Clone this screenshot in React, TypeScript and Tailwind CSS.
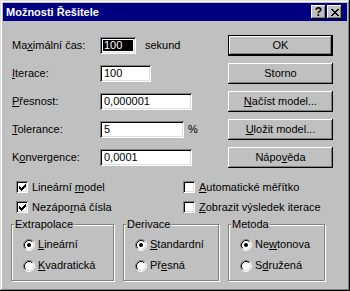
import type { ReactNode } from "react";

const raised =
  "shadow-[inset_-1px_-1px_#000,inset_1px_1px_#fff,inset_-2px_-2px_#808080]";
const sunken =
  "shadow-[inset_1px_1px_#808080,inset_-1px_-1px_#fff,inset_2px_2px_#000,inset_-2px_-2px_#dfdfdf]";

function TitleButton({ children }: { children: ReactNode }) {
  return (
    <div className={`w-[15px] h-[14px] bg-[#c0c0c0] flex items-center justify-center ${raised}`}>
      {children}
    </div>
  );
}

function CloseGlyph() {
  return (
    <svg width="8" height="7" viewBox="0 0 8 7" shapeRendering="crispEdges">
      <path
        fill="#000"
        d="M0 0h2v1h-2z M6 0h2v1h-2z M1 1h2v1h-2z M5 1h2v1h-2z M2 2h4v1h-4z M3 3h2v1h-2z M2 4h4v1h-4z M1 5h2v1h-2z M5 5h2v1h-2z M0 6h2v1h-2z M6 6h2v1h-2z"
      />
    </svg>
  );
}

function Field({ value, width, selected }: { value: string; width: string; selected?: boolean }) {
  return (
    <div className={`${width} h-[17px] bg-white ${sunken} ${selected ? "p-[3px]" : "pl-[4px]"} flex items-center`}>
      {selected ? (
        <div className="bg-black text-white w-full h-full flex items-center pl-[1px]">{value}</div>
      ) : (
        value
      )}
    </div>
  );
}

function Button({ children, isDefault }: { children: ReactNode; isDefault?: boolean }) {
  return (
    <div
      className={`w-[105px] h-[21px] flex items-center justify-center bg-[#c0c0c0] ${raised} ${
        isDefault ? "border border-black" : ""
      }`}
    >
      {children}
    </div>
  );
}

function Checkbox({ children, checked }: { children: ReactNode; checked?: boolean }) {
  return (
    <div className="flex items-center h-[20px]">
      <div className={`w-[12px] h-[12px] bg-white ${sunken} flex items-center justify-center`}>
        {checked && (
          <svg width="7" height="7" viewBox="0 0 7 7" shapeRendering="crispEdges">
            <path
              fill="#000"
              d="M6 0h1v1h-1z M5 1h2v1h-2z M0 2h1v1h-1z M4 2h3v1h-3z M0 3h2v1h-2z M3 3h3v1h-3z M0 4h5v1h-5z M1 5h3v1h-3z M2 6h1v1h-1z"
            />
          </svg>
        )}
      </div>
      <span className="ml-[4px]">{children}</span>
    </div>
  );
}

function Radio({ children, checked }: { children: ReactNode; checked?: boolean }) {
  return (
    <div className="flex items-center h-[21px] pl-[11px]">
      <svg width="12" height="12" viewBox="0 0 12 12">
        <circle cx="6" cy="6" r="4.5" fill="#fff" />
        <path d="M2.11 9.89 A5.5 5.5 0 0 1 9.89 2.11" stroke="#808080" fill="none" />
        <path d="M9.89 2.11 A5.5 5.5 0 0 1 2.11 9.89" stroke="#fff" fill="none" />
        <path d="M2.82 9.18 A4.5 4.5 0 0 1 9.18 2.82" stroke="#000" fill="none" />
        <path d="M9.18 2.82 A4.5 4.5 0 0 1 2.82 9.18" stroke="#dfdfdf" fill="none" />
        {checked && <circle cx="6" cy="6" r="2" fill="#000" />}
      </svg>
      <span className="ml-[3px]">{children}</span>
    </div>
  );
}

function Group({ title, width, children }: { title: string; width: string; children: ReactNode }) {
  return (
    <fieldset
      className={`${width} border border-[#808080] shadow-[inset_1px_1px_#fff,1px_1px_#fff] pt-[3px] pb-[4px]`}
    >
      <legend className="ml-[2px] px-px bg-[#c0c0c0] leading-[13px]">{title}</legend>
      {children}
    </fieldset>
  );
}

export default function App() {
  return (
    <div
      className={`w-[350px] h-[291px] bg-[#c0c0c0] p-[3px] flex flex-col text-[11px] leading-[13px] text-black font-['Liberation_Sans',Arial,sans-serif] shadow-[inset_-1px_-1px_#000,inset_1px_1px_#dfdfdf,inset_-2px_-2px_#808080,inset_2px_2px_#fff]`}
    >
      {/* Title bar */}
      <div className="h-[18px] bg-[#000080] flex items-center pl-[3px] pr-[5px]">
        <span className="text-white font-bold">Možnosti Řešitele</span>
        <div className="ml-auto flex gap-[1px]">
          <TitleButton>
            <span className="font-bold text-[12px] leading-none">?</span>
          </TitleButton>
          <TitleButton>
            <CloseGlyph />
          </TitleButton>
        </div>
      </div>

      <div className="pt-[10px] pl-[8px]">
        {/* Parameters + buttons */}
        <div className="pl-[1px] grid grid-cols-[88px_128px_105px] auto-rows-[28px] items-center">
          <span>
            Ma<u>x</u>imální čas:
          </span>
          <div className="flex items-center">
            <Field value="100" width="w-[36px]" selected />
            <span className="ml-[9px]">sekund</span>
          </div>
          <Button isDefault>OK</Button>

          <span>
            <u>I</u>terace:
          </span>
          <Field value="100" width="w-[51px]" />
          <Button>Storno</Button>

          <span>
            <u>P</u>řesnost:
          </span>
          <Field value="0,000001" width="w-[92px]" />
          <Button>
            <span>
              <u>N</u>ačíst model...
            </span>
          </Button>

          <span>
            <u>T</u>olerance:
          </span>
          <div className="flex items-center">
            <Field value="5" width="w-[84px]" />
            <span className="ml-[4px]">%</span>
          </div>
          <Button>
            <span>
              <u>U</u>ložit model...
            </span>
          </Button>

          <span>
            K<u>o</u>nvergence:
          </span>
          <Field value="0,0001" width="w-[92px]" />
          <Button>
            <span>
              Nápo<u>v</u>ěda
            </span>
          </Button>
        </div>

        {/* Checkboxes */}
        <div className="mt-[6px] pl-[5px] grid grid-cols-[167px_1fr]">
          <Checkbox checked>
            Lineární <u>m</u>odel
          </Checkbox>
          <Checkbox>
            <u>A</u>utomatické měřítko
          </Checkbox>
          <Checkbox checked>
            Nezápo<u>r</u>ná čísla
          </Checkbox>
          <Checkbox>
            <u>Z</u>obrazit výsledek iterace
          </Checkbox>
        </div>

        {/* Groups */}
        <div className="mt-[1px] flex gap-[9px]">
          <Group title="Extrapolace" width="w-[103px]">
            <Radio checked>
              <u>L</u>ineární
            </Radio>
            <Radio>
              <u>K</u>vadratická
            </Radio>
          </Group>
          <Group title="Derivace" width="w-[96px]">
            <Radio checked>
              <u>S</u>tandardní
            </Radio>
            <Radio>
              Př<u>e</u>sná
            </Radio>
          </Group>
          <Group title="Metoda" width="w-[97px]">
            <Radio checked>
              Ne<u>w</u>tonova
            </Radio>
            <Radio>
              S<u>d</u>ružená
            </Radio>
          </Group>
        </div>
      </div>
    </div>
  );
}
